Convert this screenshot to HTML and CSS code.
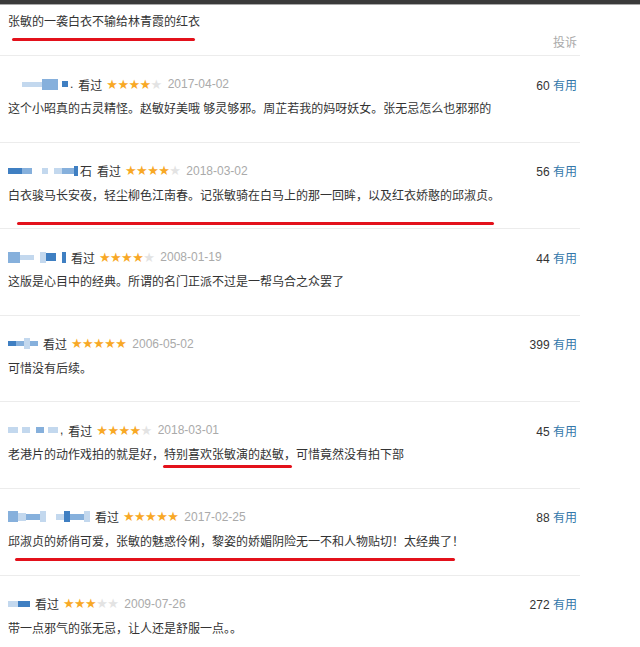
FILE: index.html
```html
<!DOCTYPE html>
<html>
<head>
  <meta charset="utf-8">
  <title>短评</title>
  <link rel="stylesheet" href="styles.css">
</head>
<body>

<div class="topbar"></div>

<div class="list">

  <div class="head">
    <div class="head-title">张敏的一袭白衣不输给林青霞的红衣</div>
    <div class="head-report">投诉</div>
    <span class="ink ink-title"></span>
  </div>

  <div class="comment">
    <div class="meta">
      <span class="who">
        <span class="user first">
          <i class="l w20 h5"></i><i class="m w16 h11"></i><i class="gap w4"></i><i class="d w6 h6"></i><em>.</em>
        </span>
        <span class="seen">看过</span>
        <span class="stars"><b>★★★★</b>★</span>
        <span class="date">2017-04-02</span>
      </span>
      <span class="vote"><span class="num">60</span> <a>有用</a></span>
    </div>
    <p class="text">这个小昭真的古灵精怪。赵敏好美哦 够灵够邪。周芷若我的妈呀妖女。张无忌怎么也邪邪的</p>
  </div>

  <div class="comment">
    <div class="meta">
      <span class="who">
        <span class="user">
          <i class="d w14 h6"></i><i class="m w10 h6"></i><i class="gap w10"></i><i class="l w6 h6"></i><i class="gap w6"></i><i class="l w8 h6"></i><i class="m w12 h6"></i><i class="d w4 h10"></i><em>石</em>
        </span>
        <span class="seen">看过</span>
        <span class="stars"><b>★★★★</b>★</span>
        <span class="date">2018-03-02</span>
      </span>
      <span class="vote"><span class="num">56</span> <a>有用</a></span>
    </div>
    <p class="text">白衣骏马长安夜，轻尘柳色江南春。记张敏骑在白马上的那一回眸，以及红衣娇憨的邱淑贞。</p>
    <span class="ink ink-2"></span>
  </div>

  <div class="comment">
    <div class="meta">
      <span class="who">
        <span class="user">
          <i class="m w12 h11"></i><i class="l w14 h5"></i><i class="gap w6"></i><i class="l w6 h11"></i><i class="d w10 h8"></i><i class="gap w6"></i><i class="d w4 h11"></i>
        </span>
        <span class="seen">看过</span>
        <span class="stars"><b>★★★★</b>★</span>
        <span class="date">2008-01-19</span>
      </span>
      <span class="vote"><span class="num">44</span> <a>有用</a></span>
    </div>
    <p class="text">这版是心目中的经典。所谓的名门正派不过是一帮乌合之众罢了</p>
  </div>

  <div class="comment">
    <div class="meta">
      <span class="who">
        <span class="user">
          <i class="d w8 h5"></i><i class="m w8 h5"></i><i class="l w6 h11"></i><i class="m w8 h5"></i>
        </span>
        <span class="seen">看过</span>
        <span class="stars"><b>★★★★★</b></span>
        <span class="date">2006-05-02</span>
      </span>
      <span class="vote"><span class="num">399</span> <a>有用</a></span>
    </div>
    <p class="text">可惜没有后续。</p>
  </div>

  <div class="comment">
    <div class="meta">
      <span class="who">
        <span class="user">
          <i class="l w10 h6"></i><i class="gap w4"></i><i class="l w8 h6"></i><i class="gap w6"></i><i class="m w8 h6"></i><i class="gap w4"></i><i class="l w10 h6"></i><em>,</em>
        </span>
        <span class="seen">看过</span>
        <span class="stars"><b>★★★★</b>★</span>
        <span class="date">2018-03-01</span>
      </span>
      <span class="vote"><span class="num">45</span> <a>有用</a></span>
    </div>
    <p class="text">老港片的动作戏拍的就是好，特别喜欢张敏演的赵敏，可惜竟然没有拍下部</p>
    <span class="ink ink-5"></span>
  </div>

  <div class="comment">
    <div class="meta">
      <span class="who">
        <span class="user">
          <i class="m w10 h11"></i><i class="l w8 h8"></i><i class="m w14 h6"></i><i class="l w6 h11"></i><i class="gap w10"></i><i class="l w8 h6"></i><i class="d w6 h11"></i><i class="m w14 h6"></i><i class="l w6 h11"></i>
        </span>
        <span class="seen">看过</span>
        <span class="stars"><b>★★★★★</b></span>
        <span class="date">2017-02-25</span>
      </span>
      <span class="vote"><span class="num">88</span> <a>有用</a></span>
    </div>
    <p class="text">邱淑贞的娇俏可爱，张敏的魅惑伶俐，黎姿的娇媚阴险无一不和人物贴切！太经典了！</p>
    <span class="ink ink-6"></span>
  </div>

  <div class="comment">
    <div class="meta">
      <span class="who">
        <span class="user">
          <i class="l w10 h6"></i><i class="d w12 h6"></i>
        </span>
        <span class="seen">看过</span>
        <span class="stars"><b>★★★</b>★★</span>
        <span class="date">2009-07-26</span>
      </span>
      <span class="vote"><span class="num">272</span> <a>有用</a></span>
    </div>
    <p class="text">带一点邪气的张无忌，让人还是舒服一点。。</p>
  </div>

</div>

</body>
</html>
```

FILE: styles.css
```css
body { margin: 0; background: #fff; color: #333; font-family: "Liberation Sans", "Noto Sans CJK SC", sans-serif; font-size: 12px; }

.topbar { height: 4px; background: #3a3a3a; border-bottom: 1px solid #a9a9a9; }

.list { width: 580px; }

.head { position: relative; padding: 8px 3px 4px 8px; border-bottom: 1px solid #ececec; }
.head-title { line-height: 18px; font-size: 12px; color: #333; }
.head-report { margin-top: 4px; line-height: 16px; text-align: right; color: #aaa; }

.comment { position: relative; padding: 18px 3px 22.6px 8px; border-bottom: 1px solid #ececec; }
.comment:last-child { border-bottom: none; }

.meta { display: flex; justify-content: space-between; align-items: center; height: 20px; }
.who { display: flex; align-items: center; }
.user { display: flex; align-items: center; height: 14px; }
.user.first { margin-left: 14px; }
.user i { display: block; }
.user em { font-style: normal; color: #333; margin-left: 2px; }
.user .l { background: #c3d8ee; }
.user .m { background: #86b0dc; }
.user .d { background: #3f7fc2; }
.w4 { width: 4px; } .w6 { width: 6px; } .w8 { width: 8px; } .w10 { width: 10px; }
.w12 { width: 12px; } .w14 { width: 14px; } .w16 { width: 16px; } .w20 { width: 20px; }
.h5 { height: 5px; } .h6 { height: 6px; } .h8 { height: 8px; } .h10 { height: 10px; } .h11 { height: 11px; }

.seen { margin-left: 5px; color: #333; }
.stars { margin-left: 4px; font-family: "DejaVu Sans", sans-serif; font-size: 13px; color: #e3e3e3; letter-spacing: -0.6px; }
.stars b { font-weight: normal; color: #f8a825; }
.date { margin-left: 6px; color: #aaa; font-size: 12px; }

.vote { color: #333; }
.vote a { color: #3377aa; }

.text { margin: 5px 0 0; line-height: 20px; }

.ink { position: absolute; height: 3px; background: #e3111b; border-radius: 2px; }
.ink-title { left: 12px; top: 33px; width: 183px; }
.ink-2 { left: 17px; top: 79px; width: 477px; }
.ink-5 { left: 163px; top: 63px; width: 129px; }
.ink-6 { left: 15px; top: 69px; width: 440px; }
```
